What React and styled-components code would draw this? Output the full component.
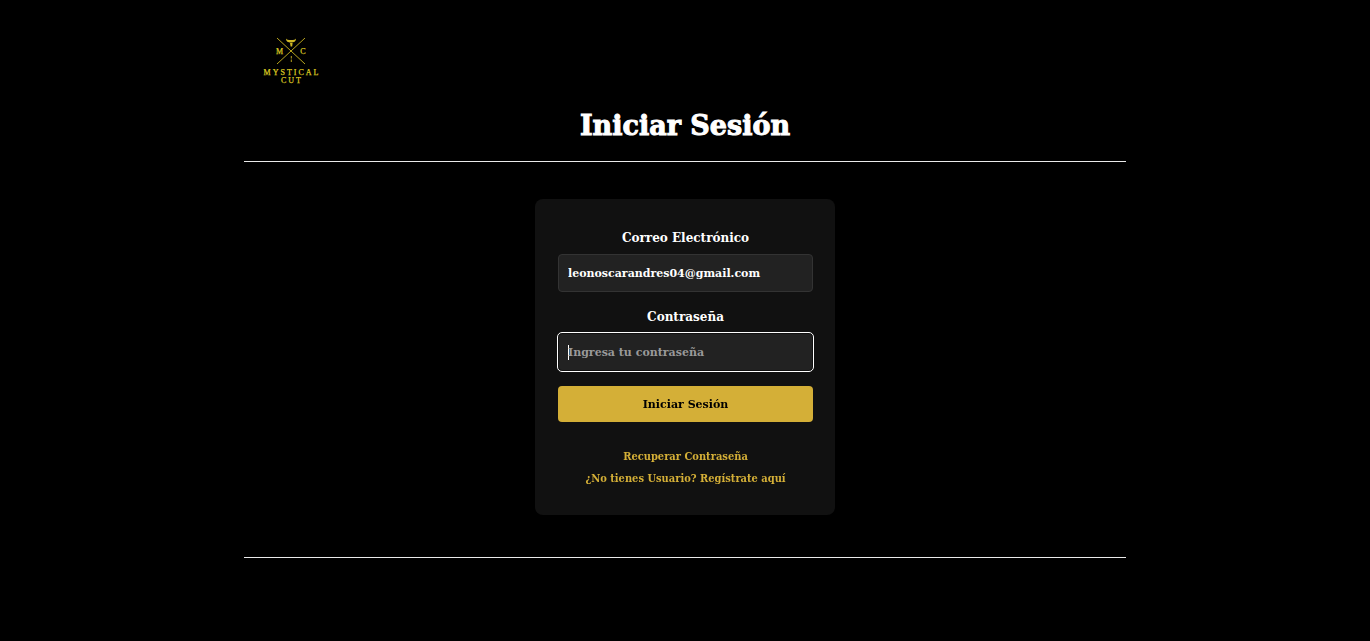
import React from "react";
import styled, { createGlobalStyle } from "styled-components";

const GlobalStyle = createGlobalStyle`
  *, *::before, *::after { box-sizing: border-box; }
  body {
    margin: 0;
    background: #000;
    color: #fff;
    font-family: "DejaVu Serif", serif;
    font-weight: 700;
  }
`;

const Page = styled.main`
  width: 100%;
  max-width: 882px;
  margin: 0 auto;
  padding: 36px 0 32px;
`;

const Header = styled.header`
  display: flex;
  flex-direction: column;
  padding-bottom: 15px;
  border-bottom: 1px solid #eaeaea;
`;

const LogoLink = styled.a`
  align-self: flex-start;
  display: block;
  height: 50px;
  margin-left: 18px;
`;

const Title = styled.h1`
  margin: 20px 0 0;
  font-size: 27px;
  line-height: 40px;
  text-align: center;
  -webkit-text-stroke: 1px #fff;
`;

const Section = styled.section`
  display: flex;
  justify-content: center;
  padding: 37px 16px 42px;
  border-bottom: 1px solid #eaeaea;
`;

const Card = styled.form`
  display: flex;
  flex-direction: column;
  width: 100%;
  max-width: 300px;
  padding: 29px 22px 25px 23px;
  background: #111;
  border-radius: 8px;
`;

const Field = styled.div`
  display: flex;
  flex-direction: column;
  gap: 5px;
  margin-bottom: 15px;
`;

const Label = styled.label`
  font-size: 12px;
  line-height: 21px;
  text-align: center;
`;

const Input = styled.input`
  width: 100%;
  height: 38px;
  padding: 0 9px;
  border: 1px solid #333;
  border-radius: 4px;
  background: #222;
  color: #fff;
  font: inherit;
  font-size: 11px;

  &::placeholder {
    color: #999;
    opacity: 1;
  }

  &:focus {
    border-color: #111;
    outline: 1px solid #fff;
  }

  /* steady caret while the field is empty */
  &:focus:placeholder-shown {
    caret-color: transparent;
    background: #222 linear-gradient(#fff, #fff) 9px center / 1px 15px no-repeat;
  }
`;

const SubmitButton = styled.button`
  height: 36px;
  border: 0;
  border-radius: 4px;
  background: #d4af37;
  color: #000;
  font: inherit;
  font-size: 11px;
  cursor: pointer;
`;

const Links = styled.nav`
  display: flex;
  flex-direction: column;
  align-items: center;
  margin-top: 24px;
`;

const TextLink = styled.a`
  color: #d4af37;
  font-family: "DejaVu Serif Condensed", "DejaVu Serif", serif;
  font-size: 11px;
  line-height: 22px;
  text-decoration: none;
`;

const LogoText = styled.text`
  fill: #dcc822;
  stroke: #dcc822;
  stroke-width: 0.25;
  font-family: "Liberation Serif", serif;
  font-weight: 400;
  text-anchor: middle;
`;

function Logo() {
  return (
    <svg width="58" height="50" viewBox="0 0 58 50" role="img" aria-label="Mystical Cut">
      <g fill="none" stroke="#b7a31e" strokeWidth="1">
        <path d="M15 2 43 28M43 2 15 28" />
        <path d="M29.3 20v2.5M29.3 23.5v2.5" />
      </g>
      <path
        d="M24 2.5c0 3 2 4 5 4s5-1 5-4c-.6 1.4-2 1.5-5 1.5s-4.4-.1-5-1.5zM28 7h2.6l-.4 3.5h-1.6z"
        fill="#d0b824"
      />
      <LogoText x="17.5" y="18" fontSize="8">M</LogoText>
      <LogoText x="41" y="18" fontSize="8">C</LogoText>
      <LogoText x="30" y="39" fontSize="8" letterSpacing="2">MYSTICAL</LogoText>
      <LogoText x="30" y="47" fontSize="8" letterSpacing="2">CUT</LogoText>
    </svg>
  );
}

export default function App() {
  return (
    <>
      <GlobalStyle />
      <Page>
        <Header>
          <LogoLink href="#inicio">
            <Logo />
          </LogoLink>
          <Title>Iniciar Sesión</Title>
        </Header>
        <Section>
          <Card onSubmit={(event) => event.preventDefault()}>
            <Field>
              <Label htmlFor="email">Correo Electrónico</Label>
              <Input id="email" type="email" defaultValue="leonoscarandres04@gmail.com" />
            </Field>
            <Field>
              <Label htmlFor="password">Contraseña</Label>
              <Input id="password" type="password" placeholder="Ingresa tu contraseña" autoFocus />
            </Field>
            <SubmitButton type="submit">Iniciar Sesión</SubmitButton>
            <Links>
              <TextLink href="#recuperar">Recuperar Contraseña</TextLink>
              <TextLink href="#registro">¿No tienes Usuario? Regístrate aquí</TextLink>
            </Links>
          </Card>
        </Section>
      </Page>
    </>
  );
}
